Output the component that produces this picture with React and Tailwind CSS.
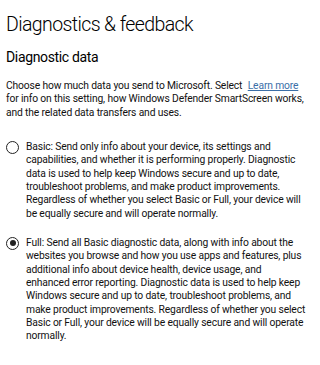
import React from 'react'

const intro = [
  'for info on this setting, how Windows Defender SmartScreen works,',
  'and the related data transfers and uses.',
]

const basic = [
  'Basic: Send only info about your device, its settings and',
  'capabilities, and whether it is performing properly. Diagnostic',
  'data is used to help keep Windows secure and up to date,',
  'troubleshoot problems, and make product improvements.',
  'Regardless of whether you select Basic or Full, your device will',
  'be equally secure and will operate normally.',
]

const full = [
  'Full: Send all Basic diagnostic data, along with info about the',
  'websites you browse and how you use apps and features, plus',
  'additional info about device health, device usage, and',
  'enhanced error reporting. Diagnostic data is used to help keep',
  'Windows secure and up to date, troubleshoot problems, and',
  'make product improvements. Regardless of whether you select',
  'Basic or Full, your device will be equally secure and will operate',
  'normally.',
]

function Radio({ checked }) {
  return (
    <span className="mt-[1px] flex h-[13px] w-[13px] shrink-0 items-center justify-center rounded-full border-[1.5px] border-[#222]">
      {checked && <span className="h-[6px] w-[6px] rounded-full bg-[#222]" />}
    </span>
  )
}

function Option({ checked, lines }) {
  return (
    <div className="flex items-start gap-[7px]">
      <Radio checked={checked} />
      <p>
        {lines.map((l) => (
          <span key={l} className="block whitespace-nowrap">{l}</span>
        ))}
      </p>
    </div>
  )
}

export default function App() {
  return (
    <div
      className="min-h-[365px] w-[320px] overflow-hidden bg-white px-[6px] pt-[12px] text-[#111]"
      style={{ fontFamily: 'Roboto, "Open Sans", sans-serif' }}
    >
      <h1 className="text-[19.5px] font-light leading-[26px] tracking-[-0.6px] text-black">Diagnostics &amp; feedback</h1>
      <h2 className="mt-[10px] text-[14px] leading-[18px] tracking-[-0.35px] text-black">Diagnostic data</h2>

      <div className="mt-[13px] text-[10.3px] leading-[13.33px] tracking-[-0.15px]">
        <p>
          <span className="block whitespace-nowrap">
            Choose how much data you send to Microsoft. Select{' '}
            <a className="ml-[3px] text-[#3b6fa8] underline">Learn more</a>
          </span>
          {intro.map((l) => (
            <span key={l} className="block whitespace-nowrap">{l}</span>
          ))}
        </p>

        <div className="mt-[21px] flex flex-col gap-[16px]">
          <Option lines={basic} />
          <Option checked lines={full} />
        </div>
      </div>
    </div>
  )
}
